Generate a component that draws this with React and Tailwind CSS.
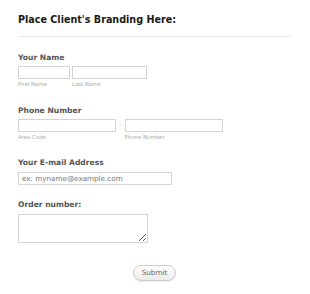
// Order form with branding header, laid out in plain flow.
const font = { fontFamily: '"DejaVu Sans", Verdana, sans-serif' }

function Label({ children }) {
  return <div className="text-[7.6px] font-bold leading-[11px] text-[#555]">{children}</div>
}

function Sub({ children, className = '' }) {
  return <span className={`block text-[5.4px] leading-[8px] text-[#aaa] ${className}`}>{children}</span>
}

function Box({ className = '', ...props }) {
  return (
    <input
      {...props}
      className={`block h-[13px] border border-[#d4d4d4] bg-white px-[3px] text-[7.2px] text-[#555] outline-none placeholder:text-[#777] ${className}`}
    />
  )
}

export default function App() {
  return (
    <div className="h-[294px] w-[310px] bg-white pl-[18px] pr-[19px] text-[8px] leading-none" style={font}>
      <h1 className="pt-[13px] text-[9.6px] font-bold leading-[14px] text-[#1a1a1a]">
        Place Client's Branding Here:
      </h1>
      <div className="mt-[9px] h-px bg-[#e8e8e8]" />

      <div className="mt-[15px]">
        <Label>Your Name</Label>
        <div className="mt-[3px] flex gap-[2px]">
          <div>
            <Box className="w-[52px]" />
            <Sub className="mt-[1px]">First Name</Sub>
          </div>
          <div>
            <Box className="w-[75px]" />
            <Sub className="mt-[1px]">Last Name</Sub>
          </div>
        </div>
      </div>

      <div className="mt-[17px]">
        <Label>Phone Number</Label>
        <div className="mt-[3px] flex gap-[3px]">
          <div>
            <Box className="w-[98px]" />
            <Sub className="mt-[1px]">Area Code</Sub>
          </div>
          <span className="text-[7px] leading-[13px] text-[#aaa]">-</span>
          <div>
            <Box className="w-[98px]" />
            <Sub className="mt-[1px]">Phone Number</Sub>
          </div>
        </div>
      </div>

      <div className="mt-[16px]">
        <Label>Your E-mail Address</Label>
        <Box className="mt-[4px] w-[154px]" placeholder="ex: myname@example.com" />
      </div>

      <div className="mt-[14px]">
        <Label>Order number:</Label>
        <textarea className="mt-[4px] block h-[29px] w-[130px] border border-[#d4d4d4] bg-white outline-none" />
      </div>

      <div className="mt-[22px] flex justify-center">
        <button
          type="button"
          className="h-[16px] rounded-full border border-[#ccc] bg-gradient-to-b from-white to-[#ececec] px-[8px] text-[7.2px] leading-[14px] text-[#666] shadow-[0_1px_1px_rgba(0,0,0,0.08)]"
        >
          Submit
        </button>
      </div>
    </div>
  )
}
